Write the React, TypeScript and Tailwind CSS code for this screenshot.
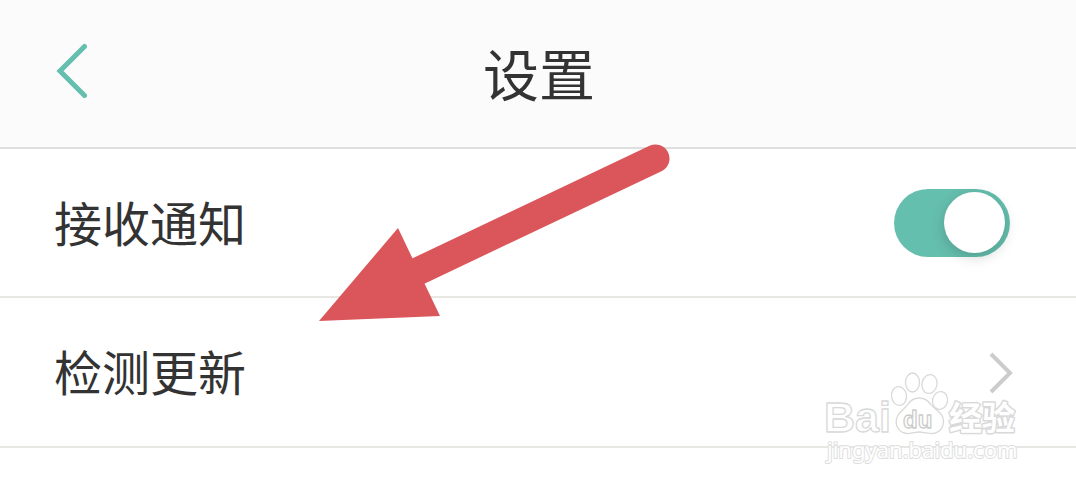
import { useState } from "react";

function Watermark() {
  return (
    <svg
      className="pointer-events-none absolute right-[52px] top-[366px] h-[104px] w-[204px]"
      viewBox="0 0 204 104"
      fill="#ffffff"
      stroke="#d9d9d9"
      strokeWidth="1.300"
      strokeLinejoin="round"
      aria-hidden="true"
    >
      <text
        x="4"
        y="66"
        className="font-['Liberation_Sans',sans-serif] text-[43px] font-bold"
      >
        Bai
      </text>
      <ellipse cx="79" cy="30" rx="7.500" ry="9.500" transform="rotate(-8 79 30)" />
      <ellipse cx="92.500" cy="16.500" rx="7" ry="9.500" />
      <ellipse cx="109.500" cy="18" rx="7.500" ry="9.500" transform="rotate(12 109.500 18)" />
      <ellipse cx="120" cy="34.500" rx="7.500" ry="9" transform="rotate(12 120 34.500)" />
      <path d="M99 32c-5 0-8 2-11 6-3 5-8 7-10.500 12C74 58 78 67 87 67.500c5 .3 8-1.500 12-1.500s8 1.800 13 1.500c9-.5 13.500-9 10.500-17C120 45 114 43 110.500 38 107.500 34 104 32 99 32Z" />
      <text
        x="83"
        y="62"
        className="font-['Liberation_Sans',sans-serif] text-[24px] font-bold"
        stroke="#cccccc"
      >
        du
      </text>
      <text
        x="129"
        y="64"
        className="font-['Noto_Sans_CJK_SC',sans-serif] text-[33px] font-bold [paint-order:stroke]"
        strokeWidth="3"
      >
        经验
      </text>
      <text
        x="7"
        y="92"
        className="font-['Noto_Sans',sans-serif] text-[22px] [paint-order:stroke]"
        stroke="#dedede"
        strokeWidth="2"
      >
        jingyan.baidu.com
      </text>
    </svg>
  );
}

function PointerArrow() {
  return (
    <svg
      className="pointer-events-none absolute left-[318px] top-[143px] h-[180px] w-[354px]"
      viewBox="318 143 354 180"
      aria-hidden="true"
    >
      <path
        d="M410 275 655.500 158.500"
        stroke="#db565b"
        strokeWidth="28"
        strokeLinecap="round"
      />
      <path d="M319 321 398 228 440 316Z" fill="#db565b" />
    </svg>
  );
}

export default function App() {
  const [notify, setNotify] = useState(true);

  return (
    <div className="relative min-h-screen overflow-hidden bg-white font-['Noto_Sans_CJK_SC',sans-serif] text-[#333333]">
      <header className="grid h-[149px] grid-cols-[1fr_auto_1fr] items-center border-b-2 border-[#dfdfdf] bg-[#fbfbfb] pb-1 pl-[54px] pr-[52px]">
        <button type="button" aria-label="返回" className="justify-self-start pb-1">
          <svg
            className="h-[56px] w-[38px]"
            viewBox="0 0 38 56"
            fill="none"
            stroke="#65bfae"
            strokeWidth="5"
            strokeLinecap="round"
          >
            <path d="M30.500 4.500 6 29 30.500 53.500" />
          </svg>
        </button>
        <h1 className="text-[56px] leading-[80px]">设置</h1>
      </header>

      <main>
        <div className="flex h-[149px] items-center justify-between border-b-2 border-[#e7e7e3] pl-[54px] pr-[66px]">
          <label htmlFor="notify" className="pb-1 text-[48px] leading-[72px]">
            接收通知
          </label>
          <input
            id="notify"
            type="checkbox"
            role="switch"
            checked={notify}
            onChange={(e) => setNotify(e.target.checked)}
            className="flex h-[68px] w-[116px] cursor-pointer appearance-none items-center rounded-full bg-[#d9d9d9] px-[5px] before:size-[61px] before:rounded-full before:bg-white before:shadow-[0_4px_14px_rgba(0,0,0,0.18)] before:content-[''] checked:justify-end checked:bg-[#65bfae]"
          />
        </div>
        <button
          type="button"
          className="flex h-[150px] w-full items-center justify-between border-b-2 border-[#e7e7e3] pl-[54px] pr-[60px] text-left"
        >
          <span className="pb-1 text-[48px] leading-[72px]">检测更新</span>
          <svg
            className="h-[44px] w-[28px]"
            viewBox="0 0 28 44"
            fill="none"
            stroke="#cccccc"
            strokeWidth="4"
          >
            <path d="M3 4 22 23 3 42" />
          </svg>
        </button>
      </main>

      <Watermark />
      <PointerArrow />
    </div>
  );
}
